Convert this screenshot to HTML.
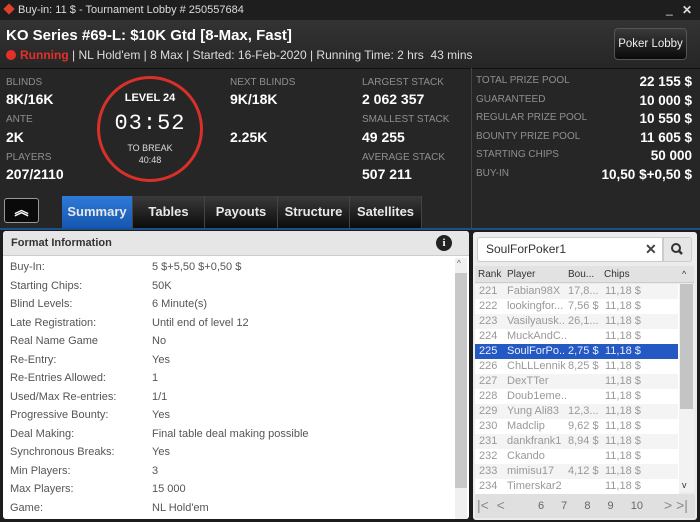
<!DOCTYPE html>
<html><head><meta charset="utf-8"><style>
*{margin:0;padding:0;box-sizing:border-box}
body{width:700px;height:522px;background:#1c1c1c;font-family:"Liberation Sans",sans-serif;position:relative;overflow:hidden;color:#fff}
.a{position:absolute;white-space:nowrap}
.lbl{color:#8f8f8f;font-size:10px}
.val{color:#fff;font-size:14px;font-weight:bold}
.rv{font-size:13.5px}
.tab{position:absolute;top:196px;height:32px;background:linear-gradient(#3a3a3a,#0c0c0c);color:#e8e8e8;font-weight:bold;font-size:13px;text-align:center;line-height:32px;border-right:1px solid #444}
.fr{position:absolute;left:10px;font-size:11px;color:#555}
.fv{position:absolute;left:152px;font-size:11px;color:#555}
.tr{position:absolute;left:475px;width:203px;height:15px;font-size:11px;color:#999;line-height:15px}
.tr span{position:absolute}
</style></head><body>
<div class="a" style="left:0;top:0;width:700px;height:20px;background:#1e1e1e"></div>
<div class="a" style="left:5px;top:5px;width:8px;height:8px;background:#e0402a;transform:rotate(45deg)"></div>
<div class="a" style="left:18px;top:4px;font-size:11px;color:#ddd">Buy-in: 11 $ - Tournament Lobby # 250557684</div>
<div class="a" style="left:666px;top:2px;font-size:12px;color:#ddd">_</div>
<div class="a" style="left:682px;top:3px;font-size:12px;color:#ddd;font-weight:bold">✕</div>
<div class="a" style="left:0;top:20px;width:700px;height:48px;background:linear-gradient(#333,#262626)"></div>
<div class="a" style="left:6px;top:27px;font-size:15px;font-weight:bold;color:#fff">KO Series #69-L: $10K Gtd [8-Max, Fast]</div>
<div class="a" style="left:6px;top:50px;width:10px;height:10px;border-radius:50%;background:#e5302a"></div>
<div class="a" style="left:20px;top:48px;font-size:12px;color:#e5302a;font-weight:bold">Running</div>
<div class="a" style="left:72px;top:48px;font-size:12px;color:#ddd">| NL Hold'em | 8 Max | Started: 16-Feb-2020 | Running Time: 2 hrs &nbsp;43 mins</div>
<div class="a" style="left:614px;top:28px;width:73px;height:32px;border:1px solid #555;border-radius:4px;background:linear-gradient(#3a3a3a,#0a0a0a);font-size:11.5px;color:#eee;text-align:center;line-height:30px">Poker Lobby</div>
<div class="a" style="left:0;top:68px;width:700px;height:160px;background:#262626;border-top:1px solid #111"></div>
<div class="a" style="left:471px;top:68px;width:1px;height:160px;background:#444"></div>
<div class="a lbl" style="left:6px;top:77px">BLINDS</div><div class="a val" style="left:6px;top:91px">8K/16K</div>
<div class="a lbl" style="left:6px;top:114px">ANTE</div><div class="a val" style="left:6px;top:129px">2K</div>
<div class="a lbl" style="left:6px;top:152px">PLAYERS</div><div class="a val" style="left:6px;top:166px">207/2110</div>
<div class="a" style="left:97px;top:76px;width:106px;height:106px;border:3px solid #d9302a;border-radius:50%"></div>
<div class="a" style="left:97px;top:92px;width:106px;text-align:center;font-size:11px;font-weight:bold">LEVEL 24</div>
<div class="a" style="left:97px;top:111px;width:106px;text-align:center;font-size:22px;font-family:'Liberation Mono',monospace;letter-spacing:1px">03:52</div>
<div class="a" style="left:97px;top:143px;width:106px;text-align:center;font-size:9px;color:#ddd">TO BREAK</div>
<div class="a" style="left:97px;top:155px;width:106px;text-align:center;font-size:9px;color:#ddd">40:48</div>
<div class="a lbl" style="left:230px;top:77px">NEXT BLINDS</div><div class="a val" style="left:230px;top:91px">9K/18K</div>
<div class="a val" style="left:230px;top:129px">2.25K</div>
<div class="a lbl" style="left:362px;top:77px">LARGEST STACK</div><div class="a val" style="left:362px;top:91px">2 062 357</div>
<div class="a lbl" style="left:362px;top:114px">SMALLEST STACK</div><div class="a val" style="left:362px;top:129px">49 255</div>
<div class="a lbl" style="left:362px;top:152px">AVERAGE STACK</div><div class="a val" style="left:362px;top:166px">507 211</div>
<div class="a lbl" style="left:476px;top:75px">TOTAL PRIZE POOL</div><div class="a val rv" style="right:8px;top:74px">22 155 $</div>
<div class="a lbl" style="left:476px;top:94px">GUARANTEED</div><div class="a val rv" style="right:8px;top:93px">10 000 $</div>
<div class="a lbl" style="left:476px;top:112px">REGULAR PRIZE POOL</div><div class="a val rv" style="right:8px;top:111px">10 550 $</div>
<div class="a lbl" style="left:476px;top:131px">BOUNTY PRIZE POOL</div><div class="a val rv" style="right:8px;top:130px">11 605 $</div>
<div class="a lbl" style="left:476px;top:149px">STARTING CHIPS</div><div class="a val rv" style="right:8px;top:148px">50 000</div>
<div class="a lbl" style="left:476px;top:168px">BUY-IN</div><div class="a val rv" style="right:8px;top:167px">10,50 $+0,50 $</div>
<div class="a" style="left:4px;top:198px;width:35px;height:25px;border:1px solid #999;border-radius:3px;background:#0a0a0a;color:#fff;text-align:center;font-size:14px;line-height:22px;font-weight:bold">︽</div>
<div class="tab" style="left:62px;width:71px;background:linear-gradient(#2f7ad8,#1557b0)">Summary</div>
<div class="tab" style="left:133px;width:72px">Tables</div>
<div class="tab" style="left:205px;width:73px">Payouts</div>
<div class="tab" style="left:278px;width:72px">Structure</div>
<div class="tab" style="left:350px;width:72px">Satellites</div>
<div class="a" style="left:0;top:228px;width:700px;height:2px;background:#1d4f8a"></div>
<div class="a" style="left:3px;top:231px;width:466px;height:288px;background:#fff;border-radius:3px;overflow:hidden">
<div class="a" style="left:0;top:0;width:466px;height:25px;background:#e6e6e6;border-bottom:1px solid #ccc"></div>
<div class="a" style="left:8px;top:6px;font-size:11px;font-weight:bold;color:#333">Format Information</div>
<div class="a" style="left:433px;top:4px;width:16px;height:16px;border-radius:50%;background:#222;color:#fff;font-size:11px;font-weight:bold;text-align:center;line-height:16px;font-family:'Liberation Serif',serif">i</div>
<div class="a" style="left:452px;top:27px;width:12px;height:261px;background:#f0f0f0"></div>
<div class="a" style="left:452px;top:42px;width:12px;height:215px;background:#c8c8c8"></div>
<div class="a" style="left:454px;top:28px;font-size:8px;color:#555">^</div>
</div>
<div class="fr" style="top:261px">Buy-In:</div><div class="fv" style="top:261px">5 $+5,50 $+0,50 $</div>
<div class="fr" style="top:280px">Starting Chips:</div><div class="fv" style="top:280px">50K</div>
<div class="fr" style="top:298px">Blind Levels:</div><div class="fv" style="top:298px">6 Minute(s)</div>
<div class="fr" style="top:317px">Late Registration:</div><div class="fv" style="top:317px">Until end of level 12</div>
<div class="fr" style="top:335px">Real Name Game</div><div class="fv" style="top:335px">No</div>
<div class="fr" style="top:354px">Re-Entry:</div><div class="fv" style="top:354px">Yes</div>
<div class="fr" style="top:372px">Re-Entries Allowed:</div><div class="fv" style="top:372px">1</div>
<div class="fr" style="top:391px">Used/Max Re-entries:</div><div class="fv" style="top:391px">1/1</div>
<div class="fr" style="top:409px">Progressive Bounty:</div><div class="fv" style="top:409px">Yes</div>
<div class="fr" style="top:428px">Deal Making:</div><div class="fv" style="top:428px">Final table deal making possible</div>
<div class="fr" style="top:446px">Synchronous Breaks:</div><div class="fv" style="top:446px">Yes</div>
<div class="fr" style="top:465px">Min Players:</div><div class="fv" style="top:465px">3</div>
<div class="fr" style="top:483px">Max Players:</div><div class="fv" style="top:483px">15 000</div>
<div class="fr" style="top:502px">Game:</div><div class="fv" style="top:502px">NL Hold'em</div>
<div class="a" style="left:473px;top:232px;width:224px;height:288px;background:#ececec;border-radius:3px"></div>
<div class="a" style="left:477px;top:237px;width:186px;height:25px;background:#fff;border:1px solid #ccc;border-radius:3px 0 0 3px"></div>
<div class="a" style="left:486px;top:242px;font-size:12px;color:#333">SoulForPoker1</div>
<div class="a" style="left:645px;top:241px;font-size:14px;color:#444;font-weight:bold">✕</div>
<div class="a" style="left:663px;top:237px;width:29px;height:25px;background:#e6e6e6;border:1px solid #ccc;border-radius:0 3px 3px 0"></div>
<svg class="a" style="left:670px;top:242px" width="14" height="14"><circle cx="6" cy="6" r="4" fill="none" stroke="#333" stroke-width="2"/><line x1="9" y1="9" x2="12" y2="12" stroke="#333" stroke-width="2.5"/></svg>
<div class="a" style="left:475px;top:266px;width:219px;height:17px;background:#e2e2e2;border-bottom:1px solid #ccc"></div>
<div class="a" style="left:478px;top:269px;font-size:10px;color:#333">Rank</div>
<div class="a" style="left:507px;top:269px;font-size:10px;color:#333">Player</div>
<div class="a" style="left:568px;top:269px;font-size:10px;color:#333">Bou...</div>
<div class="a" style="left:604px;top:269px;font-size:10px;color:#333">Chips</div>
<div class="a" style="left:682px;top:269px;font-size:9px;color:#333">^</div>
<div class="a" style="left:679px;top:284px;width:15px;height:208px;background:#f2f2f2"></div>
<div class="a" style="left:680px;top:284px;width:13px;height:125px;background:#c4c4c4"></div>
<div class="a" style="left:682px;top:480px;font-size:9px;color:#333">v</div>
<div class="a" style="left:475px;top:284px;width:204px;height:210px;background:#fff"></div>
<div class="tr" style="top:284px;background:#f4f4f4"><span style="left:4px">221</span><span style="left:32px">Fabian98X</span><span style="left:93px">17,8...</span><span style="left:130px">11,18 $</span></div>
<div class="tr" style="top:299px"><span style="left:4px">222</span><span style="left:32px">lookingfor...</span><span style="left:93px">7,56 $</span><span style="left:130px">11,18 $</span></div>
<div class="tr" style="top:314px;background:#f4f4f4"><span style="left:4px">223</span><span style="left:32px">Vasilyausk..</span><span style="left:93px">26,1...</span><span style="left:130px">11,18 $</span></div>
<div class="tr" style="top:329px"><span style="left:4px">224</span><span style="left:32px">MuckAndC..</span><span style="left:130px">11,18 $</span></div>
<div class="tr" style="top:344px;background:#2459c4;color:#e8eefa"><span style="left:4px">225</span><span style="left:32px">SoulForPo..</span><span style="left:93px">2,75 $</span><span style="left:130px">11,18 $</span></div>
<div class="tr" style="top:359px"><span style="left:4px">226</span><span style="left:32px">ChLLLennik</span><span style="left:93px">8,25 $</span><span style="left:130px">11,18 $</span></div>
<div class="tr" style="top:374px;background:#f4f4f4"><span style="left:4px">227</span><span style="left:32px">DexTTer</span><span style="left:130px">11,18 $</span></div>
<div class="tr" style="top:389px"><span style="left:4px">228</span><span style="left:32px">Doub1eme..</span><span style="left:130px">11,18 $</span></div>
<div class="tr" style="top:404px;background:#f4f4f4"><span style="left:4px">229</span><span style="left:32px">Yung Ali83</span><span style="left:93px">12,3...</span><span style="left:130px">11,18 $</span></div>
<div class="tr" style="top:419px"><span style="left:4px">230</span><span style="left:32px">Madclip</span><span style="left:93px">9,62 $</span><span style="left:130px">11,18 $</span></div>
<div class="tr" style="top:434px;background:#f4f4f4"><span style="left:4px">231</span><span style="left:32px">dankfrank1</span><span style="left:93px">8,94 $</span><span style="left:130px">11,18 $</span></div>
<div class="tr" style="top:449px"><span style="left:4px">232</span><span style="left:32px">Ckando</span><span style="left:130px">11,18 $</span></div>
<div class="tr" style="top:464px;background:#f4f4f4"><span style="left:4px">233</span><span style="left:32px">mimisu17</span><span style="left:93px">4,12 $</span><span style="left:130px">11,18 $</span></div>
<div class="tr" style="top:479px"><span style="left:4px">234</span><span style="left:32px">Timerskar2</span><span style="left:130px">11,18 $</span></div>
<div class="a" style="left:475px;top:494px;width:220px;height:24px;background:#e0e0e0"></div>
<div class="a" style="left:477px;top:497px;font-size:14px;color:#888">|&lt; &nbsp;&lt;</div>
<div class="a" style="left:538px;top:500px;font-size:11px;color:#666;word-spacing:14px">6 7 8 9 10</div>
<div class="a" style="left:664px;top:497px;font-size:14px;color:#888">&gt; &gt;|</div>
</body></html>
